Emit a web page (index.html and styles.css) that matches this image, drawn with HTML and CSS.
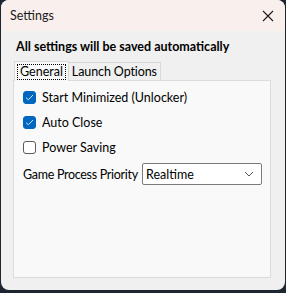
FILE: index.html
```html
<!DOCTYPE html>
<html lang="en">
<head>
  <meta charset="UTF-8">
  <title>Settings</title>
  <link rel="stylesheet" href="styles.css">
</head>
<body>
  <div class="window">
    <div class="titlebar">
      <span class="title">Settings</span>
      <svg class="close" width="12" height="12" viewBox="0 0 12 12">
        <path d="M1 1 L11 11 M11 1 L1 11" stroke="#1a1a1a" stroke-width="1.1" fill="none"/>
      </svg>
    </div>
    <div class="content">
      <h1>All settings will be saved automatically</h1>
      <div class="tabs">
        <div class="tab active"><span class="focus">General</span></div>
        <div class="tab">Launch Options</div>
      </div>
      <div class="panel">
        <label class="check-row">
          <span class="box checked">
            <svg width="9" height="7" viewBox="0 0 9 7"><path d="M1 3.6 L3.3 5.8 L8 1" stroke="#cfe3f7" stroke-width="1" fill="none"/></svg>
          </span>
          Start Minimized (Unlocker)
        </label>
        <label class="check-row">
          <span class="box checked">
            <svg width="9" height="7" viewBox="0 0 9 7"><path d="M1 3.6 L3.3 5.8 L8 1" stroke="#cfe3f7" stroke-width="1" fill="none"/></svg>
          </span>
          Auto Close
        </label>
        <label class="check-row">
          <span class="box"></span>
          Power Saving
        </label>
        <div class="priority-row">
          <span class="label">Game Process Priority</span>
          <div class="select">
            <span>Realtime</span>
            <svg width="10" height="6" viewBox="0 0 10 6"><path d="M1 1 L5 5 L9 1" stroke="#555" stroke-width="1" fill="none"/></svg>
          </div>
        </div>
      </div>
    </div>
  </div>
</body>
</html>
```

FILE: styles.css
```css
body {
  margin: 0;
  background-color: #1d2530;
  font-family: Lato, "Noto Sans", sans-serif;
  font-size: 12.5px;
  color: #000;
}
.window {
  width: 284px;
  height: 290px;
  background: #f0f0f0;
  border-radius: 8px;
  overflow: hidden;
  margin-left: 1px;
  display: flex;
  flex-direction: column;
}
.titlebar {
  height: 31px;
  background: #f9f0ee;
  display: flex;
  align-items: center;
  justify-content: space-between;
  padding: 0 10px 0 9px;
}
.title {
  color: #1a1a1a;
}
.close {
  margin-right: 1px;
}
.content {
  flex: 1;
  padding: 8px 14px 12px 12px;
  display: flex;
  flex-direction: column;
}
h1 {
  font-size: 12.5px;
  font-weight: bold;
  margin: 0 0 5px 3px;
  line-height: 16px;
}
.tabs {
  display: flex;
  align-items: flex-end;
  height: 20px;
  position: relative;
  z-index: 1;
}
.tab {
  height: 17px;
  line-height: 17px;
  padding: 0 3px;
  border: 1px solid #d9d9d9;
  border-bottom: none;
  background: #f0f0f0;
  margin-left: -1px;
  letter-spacing: -0.1px;
}
.tab.active {
  height: 19px;
  line-height: 19px;
  background: #f9f9f9;
  padding: 0 2px;
  margin-left: 1px;
  position: relative;
  top: 1px;
  letter-spacing: 0;
}
.focus {
  border: 1px dotted #000;
  padding: 0 2px;
  line-height: 14px;
  display: inline-block;
}
.panel {
  flex: 1;
  background: #f9f9f9;
  border: 1px solid #dcdcdc;
  padding: 3px 8px 0 9px;
  display: flex;
  flex-direction: column;
}
.check-row {
  display: flex;
  align-items: center;
  gap: 6px;
  height: 25px;
}
.check-row:first-child {
  margin-top: 1px;
}
.box {
  width: 11px;
  height: 11px;
  border: 1px solid #5c5c5c;
  border-radius: 3px;
  background: #fff;
  display: flex;
  align-items: center;
  justify-content: center;
}
.box.checked {
  background: #0067c0;
  border-color: #0067c0;
}
.priority-row {
  display: flex;
  align-items: center;
  justify-content: space-between;
  margin-top: 3px;
}
.label {
  white-space: nowrap;
  letter-spacing: -0.3px;
}
.select {
  flex-shrink: 0;
  width: 108px;
  height: 20px;
  border: 1px solid #7a7a7a;
  border-radius: 2px;
  background: #fff;
  display: flex;
  align-items: center;
  justify-content: space-between;
  padding: 0 7px 0 3px;
}
```
